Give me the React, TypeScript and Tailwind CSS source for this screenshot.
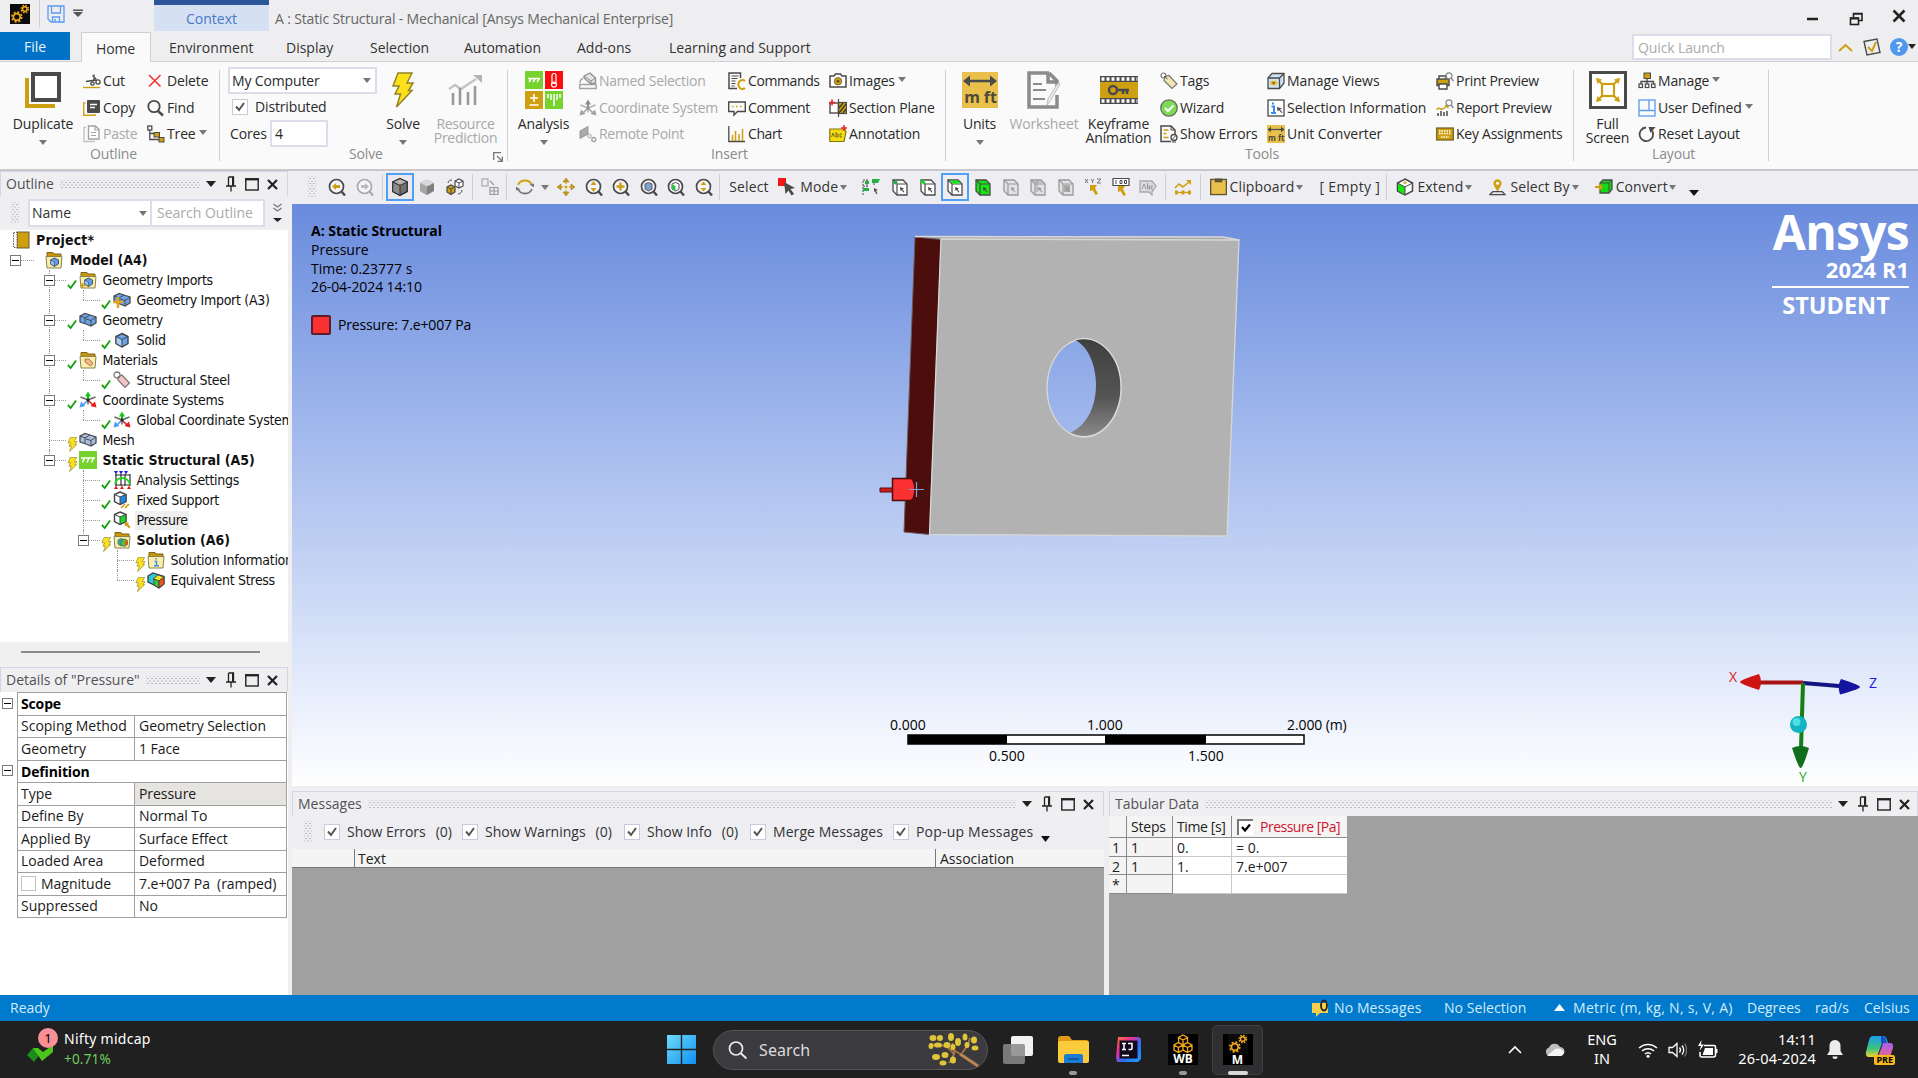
import React from "react";

type P = { children?: React.ReactNode; className?: string };

/* ---------- small building blocks ---------- */

function Svg({ children, className = "w-[18px] h-[18px]", box = "0 0 18 18" }: P & { box?: string }) {
  return (
    <svg viewBox={box} className={"shrink-0 " + className} fill="none">
      {children}
    </svg>
  );
}

function Tri({ className = "", look = "h-[5px] w-[8px] text-[#777]" }: P & { look?: string }) {
  return (
    <svg viewBox="0 0 8 5" preserveAspectRatio="none" className={"shrink-0 " + look + " " + className}>
      <path d="M0 0h8L4 5z" fill="currentColor" />
    </svg>
  );
}

function Sep({ className = "" }: P) {
  return <div className={"w-px shrink-0 bg-[#d0d0d4] " + className} />;
}

const DARK = "#4a4a4a";
const GOLD = "#cf9f12";
const LITE = "#a3a3a3";

/* ---------- ribbon icons ---------- */

const Gears = ({ className = "w-5 h-5" }: P) => (
  <Svg className={className} box="0 0 20 20">
    <rect width="20" height="20" fill="#0b0b0b" />
    <circle cx="6.8" cy="13" r="3.4" stroke="#f5a81c" strokeWidth="1.8" />
    <circle cx="6.8" cy="13" r="5" stroke="#f5a81c" strokeWidth="1.5" strokeDasharray="2 1.93" />
    <circle cx="14.8" cy="5" r="2.3" stroke="#f5a81c" strokeWidth="1.5" />
    <circle cx="14.8" cy="5" r="3.7" stroke="#f5a81c" strokeWidth="1.3" strokeDasharray="1.6 1.3" />
  </Svg>
);

const SaveIcon = () => (
  <Svg>
    <path d="M1 1h16v16H4l-3-3z" stroke="#5b9bf0" strokeWidth="1.3" />
    <path d="M4.5 1v7h9V1M5.5 17v-5h7v5M8 14v3" stroke="#5b9bf0" strokeWidth="1.3" />
  </Svg>
);

const DuplicateIcon = () => (
  <Svg className="w-9 h-9" box="0 0 36 36">
    <path d="M2 6v28h28" stroke={GOLD} strokeWidth="4" />
    <rect x="8" y="2" width="26" height="26" stroke={DARK} strokeWidth="4" fill="#fff" />
  </Svg>
);

const CutIcon = () => (
  <Svg>
    <path d="M0 15.5h17" stroke={GOLD} strokeWidth="1.4" />
    <path d="M3 9.5l10-1.5M11 2.5v4l-2 4M9.5 3.5l4 4" stroke={DARK} strokeWidth="1.3" />
    <circle cx="15" cy="10" r="2.1" stroke={DARK} strokeWidth="1.3" />
    <circle cx="9.5" cy="11.5" r="1.7" stroke={DARK} strokeWidth="1.3" />
  </Svg>
);

const CopyIcon = () => (
  <Svg>
    <path d="M2.5 4H.7v12.3H12V15" stroke={GOLD} strokeWidth="1.4" />
    <rect x="4" y="1" width="13" height="13" rx="1" fill={DARK} />
    <path d="M7 5.5h7M7 8.5h5" stroke="#fff" strokeWidth="1.3" />
  </Svg>
);

const PasteIcon = () => (
  <Svg>
    <path d="M3 2.5H1v14h11" stroke="#c4c4c4" strokeWidth="1.4" />
    <path d="M5.5 1h7l3.5 3.5V14H5.5z" stroke={LITE} strokeWidth="1.4" fill="#fff" />
    <path d="M12 1v4h4M8 7.5h5M8 10.5h5" stroke={LITE} strokeWidth="1.2" />
  </Svg>
);

const DeleteIcon = () => (
  <Svg>
    <path d="M2 3l11.5 11.5M13.5 3L2 14.5" stroke="#f03030" strokeWidth="1.5" />
  </Svg>
);

const FindIcon = () => (
  <Svg>
    <circle cx="7" cy="7.5" r="5.7" stroke={DARK} strokeWidth="1.8" />
    <path d="M11 12l5 4.5" stroke={DARK} strokeWidth="2.4" />
  </Svg>
);

const TreeIcon = () => (
  <Svg>
    <rect x="0.8" y="1" width="4" height="4" stroke={DARK} strokeWidth="1.3" />
    <path d="M2.8 5v9.5H12M2.8 8.5H7" stroke={DARK} strokeWidth="1.3" />
    <rect x="7" y="7.5" width="5.5" height="4.5" fill={GOLD} stroke={DARK} />
    <rect x="12" y="12.5" width="5" height="4.5" fill={GOLD} stroke={DARK} />
  </Svg>
);

const Bolt = ({ className = "w-[24px] h-[36px]" }: P) => (
  <svg viewBox="0 0 24 36" preserveAspectRatio="none" className={"shrink-0 " + className}>
    <path d="M7 1h14l-5 10h6l-4.5 7.5h3.5L5.5 35l4-13H4l4-8H2z" fill="#fbe11c" stroke="#93832a" strokeWidth="1.5" />
  </svg>
);

const ResourceIcon = () => (
  <Svg className="w-[35px] h-[32px]" box="0 0 35 32">
    <path d="M1 15l6-4 6 4L28 5" stroke="#c4c4c4" strokeWidth="2.5" />
    <path d="M25 1h9v8z" fill="#b4b4b4" />
    <path d="M5 31V19M12 31V14M20 31V18M27 31V12" stroke="#999" strokeWidth="2.6" />
  </Svg>
);

const AnalysisIcon = () => (
  <Svg className="w-[38px] h-[38px]" box="0 0 38 38">
    <rect width="18" height="18" fill="#76d22c" />
    <rect x="20" width="18" height="18" fill="#fb0d0d" />
    <rect y="20" width="18" height="18" fill={GOLD} />
    <rect x="20" y="20" width="18" height="18" fill="#76d22c" />
    <path d="M3 7.5h12M6 8l-2 3M10 8l-2 3M14 8l-2 3" stroke="#fff" strokeWidth="1.5" />
    <rect x="27" y="2.5" width="4" height="10" rx="2" stroke="#fff" strokeWidth="1.2" />
    <circle cx="29" cy="13.5" r="2.5" stroke="#fff" strokeWidth="1.2" />
    <path d="M9 23v8M5 27h8M4.5 34h9" stroke="#fff" strokeWidth="1.6" />
    <path d="M23 23v4M26 23v6M29 23v12M32 23v6M35 23v4" stroke="#fff" strokeWidth="1.5" />
  </Svg>
);

const NamedSelIcon = () => (
  <Svg>
    <path d="M.7 12.5h16.5v4H.7z" stroke={LITE} strokeWidth="1.4" />
    <path d="M5 4l6-3 5.5 5v5L12 12 5 6z" stroke="#8d8d8d" strokeWidth="1.3" fill="#e3e3e3" />
    <path d="M5 4l7 5v3M12 9l4.5-3" stroke="#8d8d8d" />
    <path d="M1 11c0-3 1-4 3-4.5" stroke={LITE} strokeWidth="1.3" />
  </Svg>
);

const AxesIcon = ({ color = false }: { color?: boolean }) => (
  <Svg>
    <path d="M9 9V3" stroke={color ? "#12b312" : "#8d8d8d"} strokeWidth="2" />
    <path d="M6 5.5L9 .5l3 5z" fill={color ? "#12c812" : "#8d8d8d"} />
    <path d="M9 9l-6 6" stroke={color ? "#4e9cf5" : "#a3a3a3"} strokeWidth="1.6" />
    <path d="M.5 16.5l1.5-6 4.5 4.5z" fill={color ? "#4e9cf5" : "#a3a3a3"} />
    <path d="M9 9l6 6" stroke={color ? "#e81c1c" : "#a3a3a3"} strokeWidth="1.6" />
    <path d="M17.5 16.5l-1.5-6-4.5 4.5z" fill={color ? "#e81c1c" : "#a3a3a3"} />
    <path d="M1.5 6L8 8.5M16.5 6L10 8.5M9 9v4.5" stroke={color ? "#666" : "#b1b1b1"} strokeWidth="1.5" />
    <circle cx="9" cy="9" r="1.5" fill={color ? "#222" : "#8d8d8d"} />
  </Svg>
);

const RemoteIcon = () => (
  <Svg>
    <path d="M1 6l8-4.5V9l-8 4.5z" fill="#aaa" stroke="#999" />
    <circle cx="10.5" cy="11" r="1.8" stroke={LITE} />
    <circle cx="14.8" cy="14.5" r="2" stroke={LITE} strokeWidth="1.3" />
  </Svg>
);

const CommandsIcon = () => (
  <Svg>
    <path d="M9 16.5H1V1h11.5v5" stroke={DARK} strokeWidth="1.5" />
    <path d="M3.5 4h7M3.5 6.5h6M3.5 9h4M3.5 11.5h4M3.5 14h3" stroke={DARK} strokeWidth="1.1" />
    <path d="M17 9a4 4.5 0 1 0 0 7" stroke={GOLD} strokeWidth="2" />
  </Svg>
);

const CommentIcon = () => (
  <Svg>
    <path d="M.7 3h16.6v9.5H9.5L6 16v-3.5H.7z" stroke={DARK} strokeWidth="1.4" />
    <path d="M4 7.5h1.5M8 7.5h1.5M12 7.5h1.5" stroke={GOLD} strokeWidth="1.5" />
  </Svg>
);

const ChartIcon = () => (
  <Svg>
    <path d="M.8 1v15.5H17" stroke={DARK} strokeWidth="1.3" />
    <path d="M4.5 16V10M7.5 16V6M11 16V9M14.5 16V4" stroke={GOLD} strokeWidth="1.5" />
  </Svg>
);

const CameraIcon = () => (
  <Svg>
    <path d="M1 4h4l1.5-2h5L13 4h4v11H1z" stroke={DARK} strokeWidth="1.5" fill="#fff" />
    <circle cx="9" cy="9.3" r="3.7" fill={GOLD} stroke="#7c6c2c" />
    <circle cx="9" cy="9.3" r="1.4" fill="#554a20" />
  </Svg>
);

const SectionIcon = () => (
  <Svg>
    <rect x="1" y="4" width="8.5" height="10" stroke={DARK} strokeWidth="1.4" fill="#fff" />
    <rect x="9.5" y="3.5" width="8" height="11" fill={GOLD} stroke={DARK} strokeWidth="1.2" />
    <path d="M10 14l7-9M10 9l4-5M14 14l3-4" stroke="#3c3c2c" strokeWidth="1.3" />
    <path d="M9.5 0v18" stroke={DARK} strokeWidth="1.2" />
    <path d="M0 3.5h6M3 .5v6" stroke="#f21c1c" strokeWidth="1.5" />
  </Svg>
);

const AnnotationIcon = () => (
  <Svg>
    <path d="M.8 4h15l1.200 2.500-2 10H.8z" fill="#f3dc12" stroke="#847412" strokeWidth="1.2" />
    <path d="M2.500 12l1.500-4L5.500 12M7 7v5h2V9H7M13 9h-2v3h2" stroke="#7c6c12" />
    <path d="M12 3h6M15 0v6" stroke="#f21c1c" strokeWidth="1.5" />
  </Svg>
);

const UnitsIcon = ({ className = "w-9 h-9" }: P) => (
  <span className={"relative shrink-0 " + className}>
    <Svg className="w-full h-full" box="0 0 36 36">
      <rect width="36" height="36" fill="#e8c04b" />
      <path d="M3 9h30" stroke={DARK} strokeWidth="2.5" />
      <path d="M1 9l7-5.5v11zM35 9l-7-5.5v11z" fill={DARK} />
      <text x="18.5" y="31" textAnchor="middle" fill="#4f4a3a" className="text-[16px] font-bold font-['Open_Sans']">
        m ft
      </text>
    </Svg>
  </span>
);

const WorksheetIcon = () => (
  <Svg className="w-[34px] h-[38px]" box="0 0 34 38">
    <path d="M22 2H2v34h28V24M22 2l8 8v6M21 2v9h9" stroke="#8b8b8b" strokeWidth="3.5" />
    <path d="M6 13h9M6 19h13M6 28h12" stroke="#8b8b8b" strokeWidth="2.2" />
    <path d="M33 13L23 30l-3 4 1-6 10-16z" fill="#eee" stroke="#bbb" />
  </Svg>
);

const KeyframeIcon = () => (
  <Svg className="w-[38px] h-[28px]" box="0 0 38 28">
    <rect width="38" height="28" fill={DARK} />
    <rect y="6" width="38" height="16" fill={GOLD} />
    <path d="M1.5 3h36M1.5 25h36" stroke="#fff" strokeWidth="3.5" strokeDasharray="3 2" />
    <circle cx="13" cy="14" r="4" stroke={DARK} strokeWidth="2.5" />
    <path d="M17 14h12M23 14v4M27 14v4" stroke={DARK} strokeWidth="2.5" />
  </Svg>
);

const TagIcon = () => (
  <Svg>
    <path d="M5 4.5l4-1 8 8.5-5 4.5-8-8z" fill="#f4e3b4" stroke="#777" strokeWidth="1.2" />
    <circle cx="3.5" cy="3.5" r="2.5" stroke="#777" strokeWidth="1.2" />
    <path d="M4 4l3.5 3" stroke="#555" />
  </Svg>
);

const WizardIcon = () => (
  <Svg>
    <circle cx="9" cy="9" r="8.2" fill="#7ed957" stroke="#5f6f5a" strokeWidth="1.3" />
    <path d="M5 9l3 3 5.5-5.5" stroke="#fff" strokeWidth="2" />
  </Svg>
);

const ErrorsIcon = () => (
  <Svg>
    <path d="M11 16.5H1V1h10l4 4v4" stroke={DARK} strokeWidth="1.5" />
    <path d="M3.5 5h5M3.5 8.5h3M3.5 12.5h5" stroke={GOLD} strokeWidth="1.4" />
    <path d="M11 1v4h4" stroke={DARK} />
    <circle cx="14" cy="12.5" r="3" stroke={DARK} strokeWidth="1.3" />
    <path d="M12 14.5l4-4M12 17h4" stroke={DARK} />
  </Svg>
);

const ViewsIcon = () => (
  <Svg>
    <path d="M1 6l4-4.5h12V11l-4.5 5.5H1z" fill="#cfe3f7" stroke={DARK} strokeWidth="1.3" />
    <path d="M1 6h11.5v10M12.5 6L17 1.5" stroke={DARK} strokeWidth="1.3" />
    <ellipse cx="6.7" cy="11" rx="4" ry="2.5" fill="#e8c04b" />
    <circle cx="6.7" cy="11" r="1.3" fill="#7c6512" />
  </Svg>
);

const InfoIcon = () => (
  <Svg>
    <rect x="1" y="1" width="16" height="16" stroke={DARK} strokeWidth="1.3" fill="#fff" />
    <path d="M6 3.5v2M4.5 7.5H7V14M4 14h5" stroke="#3c8cf0" strokeWidth="2" />
    <path d="M10 8l5 1.5-2 1 2.5 3-1 .5-2.5-3-1.5 1.5z" fill={DARK} />
  </Svg>
);

const PrintIcon = () => (
  <Svg>
    <path d="M3 7V4h7v3" stroke={DARK} strokeWidth="1.4" />
    <rect x="1" y="7" width="12" height="6.5" fill={GOLD} stroke={DARK} strokeWidth="1.4" />
    <path d="M3 12h8v5H3z" fill="#fff" stroke={DARK} strokeWidth="1.4" />
    <circle cx="13" cy="3.8" r="3" stroke="#888" strokeWidth="1.2" />
    <path d="M15 6l2.5 3" stroke="#888" strokeWidth="1.5" />
  </Svg>
);

const ReportIcon = () => (
  <Svg>
    <path d="M2 17v-3M5 17v-5M8 17v-4M11 17v-5" stroke={DARK} strokeWidth="1.5" />
    <path d="M.5 10.5L3 9l3 1.5L11 7" stroke={GOLD} strokeWidth="1.5" />
    <path d="M8.5 6h4v4z" fill={GOLD} />
    <circle cx="13" cy="3.8" r="3" stroke="#888" strokeWidth="1.2" />
    <path d="M15 6l2.5 3" stroke="#888" strokeWidth="1.5" />
  </Svg>
);

const KeyboardIcon = () => (
  <Svg>
    <rect x=".7" y="3" width="16.6" height="12" fill={GOLD} stroke="#6c5c1c" strokeWidth="1.2" />
    <path d="M3 6h12M3 8.5h12M5 12h8" stroke="#fff" strokeWidth="1.4" strokeDasharray="1.5 1" />
  </Svg>
);

const FullIcon = () => (
  <Svg className="w-[38px] h-[38px]" box="0 0 38 38">
    <rect x="1.5" y="1.5" width="35" height="35" stroke={DARK} strokeWidth="3" fill="#fff" />
    <rect x="13" y="13" width="12" height="12" stroke={GOLD} strokeWidth="2.2" />
    <path d="M13 13L8 8M25 13l5-5M13 25l-5 5M25 25l5 5" stroke={GOLD} strokeWidth="2" />
    <path d="M7 7l6 1.5-4.5 4.5zM31 7l-6 1.5 4.5 4.5zM7 31l6-1.5L8.5 25zM31 31l-6-1.5 4.5-4.5z" fill={GOLD} />
  </Svg>
);

const ManageIcon = () => (
  <Svg>
    <rect x="6" y="1" width="6.5" height="5.5" fill={GOLD} stroke={DARK} />
    <path d="M9 6.5V12M3 12V9.5h12.5V12" stroke={DARK} strokeWidth="1.3" />
    <rect x="1" y="12" width="3.5" height="3.5" stroke={DARK} strokeWidth="1.2" />
    <rect x="7.3" y="12" width="3.5" height="3.5" stroke={DARK} strokeWidth="1.2" />
    <rect x="13.5" y="12" width="3.5" height="3.5" stroke={DARK} strokeWidth="1.2" />
  </Svg>
);

const UserDefIcon = () => (
  <Svg>
    <rect x="1" y="1" width="16" height="16" stroke="#5b9bf0" strokeWidth="1.3" />
    <path d="M11 1v10.5M1 11.5h16" stroke="#5b9bf0" strokeWidth="1.3" />
  </Svg>
);

const ResetIcon = () => (
  <Svg>
    <path d="M8 2.5a6.8 6.8 0 1 0 6 3" stroke={DARK} strokeWidth="1.8" />
    <path d="M10.5 2h7l-5 6z" fill={DARK} />
  </Svg>
);

/* ---------- ribbon ---------- */

function Item({ icon, label, off, drop }: { icon: React.ReactNode; label: string; off?: boolean; drop?: boolean }) {
  return (
    <div className="flex h-[26.5px] shrink-0 items-center gap-[2px] whitespace-nowrap">
      {icon}
      <span className={off ? "tracking-[-0.27px] text-[#a8a8a8]" : ""}>{label}</span>
      {drop && <Tri className="mt-[-3px] ml-px" />}
    </div>
  );
}

function Col({ children, className = "" }: P) {
  return <div className={"flex shrink-0 flex-col pt-[6px] " + className}>{children}</div>;
}

function Big({ icon, lines, off, drop, className = "" }: { icon: React.ReactNode; lines: string[]; off?: boolean; drop?: boolean; className?: string }) {
  return (
    <div className={"flex shrink-0 flex-col items-center pt-[9px] " + className}>
      <div className="flex h-[38px] items-center justify-center">{icon}</div>
      <div className={"mt-[8px] flex flex-col items-center leading-[14px] whitespace-nowrap " + (off ? "text-[#a8a8a8]" : "")}>
        {lines.map((l) => (
          <span key={l}>{l}</span>
        ))}
      </div>
      {drop && <Tri className="mt-[9px]" />}
    </div>
  );
}

function Group({ children, name, className = "", nameClass = "" }: P & { name: string; nameClass?: string }) {
  return (
    <div className={"flex shrink-0 flex-col " + className}>
      <div className="flex h-[84px]">{children}</div>
      <div className={"leading-[16px] text-[#8b8b8b] " + nameClass}>{name}</div>
    </div>
  );
}

function Check({ className = "" }: P) {
  return (
    <span className={"flex h-4 w-4 shrink-0 items-center justify-center border border-[#c9cbdd] bg-white " + className}>
      <svg viewBox="0 0 10 10" className="h-[10px] w-[10px]" fill="none">
        <path d="M1 4.5L4 8l5-7" stroke="#555" strokeWidth="2" />
      </svg>
    </span>
  );
}

function Ribbon() {
  return (
    <div className="flex h-[109px] shrink-0 border-b-2 border-[#c9c9cb] bg-[#fafafa] tracking-[-0.15px] text-[#2a2a2a]">
      <Group name="Outline" className="w-[219px]" nameClass="pl-[90px]">
        <Big icon={<DuplicateIcon />} lines={["Duplicate"]} drop className="w-[83px] pl-[3px]" />
        <Col className="w-[64px]">
          <Item icon={<CutIcon />} label="Cut" />
          <Item icon={<CopyIcon />} label="Copy" />
          <Item icon={<PasteIcon />} label="Paste" off />
        </Col>
        <Col>
          <Item icon={<DeleteIcon />} label="Delete" />
          <Item icon={<FindIcon />} label="Find" />
          <Item icon={<TreeIcon />} label="Tree" drop />
        </Col>
      </Group>
      <Sep className="mt-2 h-[91px]" />
      <Group name="Solve" className="relative w-[287px]" nameClass="pl-[129px]">
        <Col className="w-[151px] gap-0 pl-[8px]">
          <div className="mt-[-1px] flex h-[27px] w-[149px] shrink-0 items-center justify-between border-2 border-[#dcdceb] bg-white pr-[4px] pl-[2px]">
            <span>My Computer</span>
            <Tri />
          </div>
          <div className="flex h-[26.5px] shrink-0 items-center gap-[7px] pl-[4px]">
            <Check />
            <span>Distributed</span>
          </div>
          <div className="flex h-[26.5px] shrink-0 items-center pl-[2px]">
            <span className="w-[40px]">Cores</span>
            <span className="flex h-[27px] w-[58px] items-center border-2 border-[#dcdceb] bg-white pl-[3px]">4</span>
          </div>
        </Col>
        <Big icon={<Bolt />} lines={["Solve"]} drop className="w-[64px]" />
        <Big icon={<ResourceIcon />} lines={["Resource", "Prediction"]} off className="w-[61px] tracking-[-0.3px]" />
        <Svg className="absolute right-[4px] bottom-[7px] h-[10px] w-[10px]" box="0 0 10 10">
          <path d="M.7 8V.7H8M4 4l5 5M9.3 4.5v4.8H4.5" stroke="#777" strokeWidth="1.3" />
        </Svg>
      </Group>
      <Sep className="mt-2 h-[91px]" />
      <Group name="Insert" className="w-[437px]" nameClass="pl-[203px]">
        <Big icon={<AnalysisIcon />} lines={["Analysis"]} drop className="w-[71px]" />
        <Col className="w-[149px]">
          <Item icon={<NamedSelIcon />} label="Named Selection" off />
          <Item icon={<AxesIcon />} label="Coordinate System" off />
          <Item icon={<RemoteIcon />} label="Remote Point" off />
        </Col>
        <Col className="w-[101px] tracking-[-0.4px]">
          <Item icon={<CommandsIcon />} label="Commands" />
          <Item icon={<CommentIcon />} label="Comment" />
          <Item icon={<ChartIcon />} label="Chart" />
        </Col>
        <Col>
          <Item icon={<CameraIcon />} label="Images" drop />
          <Item icon={<SectionIcon />} label="Section Plane" />
          <Item icon={<AnnotationIcon />} label="Annotation" />
        </Col>
      </Group>
      <Sep className="mt-2 h-[91px]" />
      <Group name="Tools" className="w-[627px]" nameClass="pl-[299px]">
        <Big icon={<UnitsIcon />} lines={["Units"]} drop className="w-[67px]" />
        <Big icon={<WorksheetIcon />} lines={["Worksheet"]} off className="w-[62px]" />
        <Big icon={<KeyframeIcon />} lines={["Keyframe", "Animation"]} className="w-[85px] pl-[2px]" />
        <Col className="w-[107px]">
          <Item icon={<TagIcon />} label="Tags" />
          <Item icon={<WizardIcon />} label="Wizard" />
          <Item icon={<ErrorsIcon />} label="Show Errors" />
        </Col>
        <Col className="w-[169px] tracking-[-0.05px]">
          <Item icon={<ViewsIcon />} label="Manage Views" />
          <Item icon={<InfoIcon />} label="Selection Information" />
          <Item icon={<UnitsIcon className="flex h-[18px] w-[18px]" />} label="Unit Converter" />
        </Col>
        <Col className="tracking-[-0.25px]">
          <Item icon={<PrintIcon />} label="Print Preview" />
          <Item icon={<ReportIcon />} label="Report Preview" />
          <Item icon={<KeyboardIcon />} label="Key Assignments" />
        </Col>
      </Group>
      <Sep className="mt-2 h-[91px]" />
      <Group name="Layout" className="w-[194px]" nameClass="pl-[78px]">
        <Big icon={<FullIcon />} lines={["Full", "Screen"]} className="w-[64px] pl-[3px]" />
        <Col>
          <Item icon={<ManageIcon />} label="Manage" drop />
          <Item icon={<UserDefIcon />} label="User Defined" drop />
          <Item icon={<ResetIcon />} label="Reset Layout" />
        </Col>
      </Group>
      <Sep className="mt-2 h-[91px]" />
    </div>
  );
}

function TopBar() {
  return (
    <div className="flex h-[62px] shrink-0 border-b border-[#cfcfd1] bg-[#eeeef0]">
      <div className="flex w-[811px] flex-col">
        <div className="flex h-[32px]">
          <div className="flex w-[154px] items-start pt-1 pl-[10px]">
            <Gears />
            <Sep className="mt-[-4px] ml-[9px] h-[28px]" />
            <span className="mt-px ml-[7px]">
              <SaveIcon />
            </span>
            <svg viewBox="0 0 10 8" className="mt-[5px] ml-[8px] h-2 w-[10px]">
              <path d="M0 .5h10v1.5H0zM0 3h10L5 8z" fill="#555" />
            </svg>
          </div>
          <div className="flex w-[115px] justify-center border-t-[5px] border-[#2b579a] bg-[#d5e1f2] pt-[4px] leading-[20px] text-[#4a78c8]">Context</div>
          <span className="pt-[9px] pl-[6px] leading-[20px] tracking-[-0.15px] whitespace-nowrap text-[#666]">A : Static Structural - Mechanical [Ansys Mechanical Enterprise]</span>
        </div>
        <div className="flex h-[30px] leading-[34px] whitespace-nowrap text-[#333]">
          <span className="mt-px h-[28px] w-[70px] bg-[#0072c6] text-center leading-[30px] text-[#e6f2fb]">File</span>
          <span className="mt-px ml-[11px] h-[30px] w-[70px] border border-b-0 border-[#cfcfd1] bg-[#fafafa] pr-px text-center leading-[31px] tracking-[-0.2px]">Home</span>
          <span className="ml-[18px] w-[117px] tracking-[0.05px]">Environment</span>
          <span className="w-[84px]">Display</span>
          <span className="w-[94px]">Selection</span>
          <span className="w-[113px]">Automation</span>
          <span className="w-[92px]">Add-ons</span>
          <span>Learning and Support</span>
        </div>
      </div>
      <div className="ml-auto flex w-[286px] flex-col">
        <div className="flex h-[34px] justify-end gap-[29px] pt-[10px] pr-[12px]">
          <Svg className="h-4 w-[14px]" box="0 0 14 16">
            <path d="M1 9h11" stroke="#222" strokeWidth="2.5" />
          </Svg>
          <Svg className="h-4 w-[14px]" box="0 0 14 16">
            <path d="M4.5 7V3.5H13v7H9.5M4 4h9" stroke="#222" strokeWidth="1.6" />
            <rect x="1.5" y="8" width="8" height="6.5" stroke="#222" strokeWidth="1.6" />
            <path d="M1.5 8.5h8" stroke="#222" strokeWidth="2" />
          </Svg>
          <Svg className="mt-[-1px] h-[14px] w-[14px]" box="0 0 14 14">
            <path d="M1.5 1.5l11 11M12.5 1.5l-11 11" stroke="#222" strokeWidth="2.5" />
          </Svg>
        </div>
        <div className="flex items-center">
          <span className="flex h-[26px] w-[200px] items-center border-2 border-[#dcdceb] bg-white pt-px pl-[4px] tracking-[-0.12px] text-[#aaa]">Quick Launch</span>
          <Svg className="ml-[6px] h-[9px] w-[15px]" box="0 0 15 9">
            <path d="M1 8l6.5-6L14 8" stroke={GOLD} strokeWidth="2" />
          </Svg>
          <Svg className="ml-[10px] h-[18px] w-[18px]">
            <path d="M1 3.5L14 1l3 13.5L4 17z" stroke={DARK} strokeWidth="1.4" />
            <path d="M5 9l4 4 4-9" stroke={GOLD} strokeWidth="2" />
          </Svg>
          <span className="ml-[9px] flex h-[18px] w-[18px] items-center justify-center rounded-full bg-[#4f97f0] text-[14px] font-bold text-white">?</span>
          <Tri look="h-[5px] w-[8px] text-[#222]" className="mt-[-2px]" />
        </div>
      </div>
    </div>
  );
}

/* ---------- docked panels ---------- */

const DOTS = "bg-[radial-gradient(#bcbcc2_0.7px,transparent_0.9px),radial-gradient(#bcbcc2_0.7px,transparent_0.9px)] bg-[length:4px_5px] bg-[position:0_0,2px_2.5px]";

function Grip({ className = "" }: P) {
  return <span className={"h-[22px] w-[8px] shrink-0 " + DOTS + " " + className} />;
}

function PanelHead({ title, className = "pr-[9px]" }: P & { title: string }) {
  return (
    <div className={"flex h-[25px] shrink-0 items-center border border-b-0 border-[#d5d6e5] bg-[#efeff2] pl-[5px] text-[#525252] " + className}>
      <span className="whitespace-nowrap">{title}</span>
      <span className={"mx-[6px] h-[8px] grow " + DOTS} />
      <Tri look="h-[6px] w-[10px] text-[#222]" />
      <Svg className="ml-[10px] h-4 w-[10px]" box="0 0 10 16">
        <path d="M2.5 1h5v8.5M2.5 1v8.5M0 10h10M5 10v5.5" stroke="#222" strokeWidth="1.3" />
        <path d="M7 1v8.5" stroke="#222" strokeWidth="2" />
      </Svg>
      <Svg className="ml-[9px] h-[13px] w-[14px]" box="0 0 14 13">
        <rect x=".8" y="1" width="12.4" height="11" stroke="#222" strokeWidth="1.4" />
        <path d="M0 1.3h14" stroke="#222" strokeWidth="2.2" />
      </Svg>
      <Svg className="ml-[8px] h-[11px] w-[11px]" box="0 0 11 11">
        <path d="M1 1l9 9M10 1l-9 9" stroke="#222" strokeWidth="2.2" />
      </Svg>
    </div>
  );
}

function Cube({ fill = "#6ba4ea", face = "#a9ccf5", className = "w-[18px] h-[18px]" }: { fill?: string; face?: string; className?: string }) {
  return (
    <Svg className={className}>
      <path d="M9 2.5l6 3v7l-6 3.5-6-3.5v-7z" fill={fill} stroke="#444" strokeWidth="1.4" />
      <path d="M3 5.5l6 3v7.5l-6-3.5z" fill={face} stroke="#444" />
      <path d="M9 8.5l6-3" stroke="#444" />
    </Svg>
  );
}

function Folder({ children }: P) {
  return (
    <Svg>
      <path d="M2 6V1.5h6l1 1.5h7v3" fill="#c8960c" stroke="#7c6414" />
      <path d="M1 5.5h16l-1 11.5H2z" fill="#f7efab" stroke="#8a8250" />
      {children}
    </Svg>
  );
}

const MiniCube = ({ a = "#5b9bf0", b = "#8ec0fa" }: { a?: string; b?: string }) => (
  <g>
    <path d="M9.5 7l4 2v4l-4 2.5-4-2.5V9z" fill={a} stroke="#555" />
    <path d="M5.5 9l4 2v4.5l-4-2.5z" fill={b} stroke="#555" strokeWidth=".7" />
  </g>
);

const TwoCubes = ({ fill = "#6ba4ea", plus = false }: { fill?: string; plus?: boolean }) => (
  <Svg>
    <path d="M1 5l5-2.5L11 4l6 2v6l-5 3-5-2-6-2z" fill={fill} stroke="#4a4a4a" strokeWidth="1.3" />
    <path d="M1 5l5 2v5M6 7l5-3M7 8l5 1.5V15M12 9.5L17 6" stroke="#4a4a4a" />
    {plus && <path d="M0 11h10M5 6v11" stroke="#e3a51c" strokeWidth="2.5" />}
  </Svg>
);

const SupportCube = ({ face, children }: P & { face: string }) => (
  <Svg>
    <path d="M7 1l6 2.5v7L7 13.5 1.5 10.5V3.5z" fill="#fff" stroke="#444" strokeWidth="1.4" />
    <path d="M7 6l6-2.5v7L7 13.5z" fill={face} stroke="#444" />
    <path d="M1.5 3.5L7 6" stroke="#444" />
    {children}
  </Svg>
);

const treeIcons: Record<string, React.ReactNode> = {
  project: (
    <Svg>
      <rect x="5" y="1" width="12" height="16" fill={GOLD} stroke="#6c5c2c" />
      <path d="M1.5 1.5H5v15H1.5z" fill="#fff" stroke="#666" strokeDasharray="1.5 1" />
    </Svg>
  ),
  model: <Folder><MiniCube /></Folder>,
  gimports: <Folder><MiniCube /><path d="M1 14.5h5M3.5 12v5" stroke="#d19a10" strokeWidth="1.5" /></Folder>,
  gimport: <TwoCubes plus />,
  geometry: <TwoCubes />,
  solid: <Cube />,
  materials: <Folder><path d="M6 8h4l4 4-2.5 3L6 11z" fill="#f2b48a" stroke="#b57a4c" /></Folder>,
  steel: (
    <Svg>
      <path d="M5 6l4-2 7.5 8-4.5 4.5-7-7.5z" fill="#f5c3c3" stroke="#777" strokeWidth="1.2" />
      <circle cx="4" cy="4" r="3" stroke="#777" strokeWidth="1.3" />
    </Svg>
  ),
  coord: <AxesIcon color />,
  mesh: <TwoCubes fill="#a9bfe0" />,
  statics: (
    <Svg>
      <rect width="18" height="18" fill="#76d22c" />
      <path d="M2 7h14M5.5 7l-2 4.5M10 7l-2 4.5M14.5 7l-2 4.5" stroke="#fff" strokeWidth="1.5" />
    </Svg>
  ),
  settings: (
    <Svg>
      <path d="M3 3v12M8 3v12M12 3v12M17 3v12M2 4h15M2 14h15" stroke="#333" strokeWidth="1.2" />
      <path d="M1 0h4L3 3.5zM6 0h4L8 3.5zM11 0h4l-2 3.5z" fill="#1c1ce8" />
      <path d="M2 13c2-8 12-8 15 0" stroke="#1cd81c" strokeWidth="1.8" />
      <path d="M1 18l2-3.5L5 18zM7 18l2-3.5 2 3.5zM14 18l2-3.5 2 3.5z" fill="#e81c1c" />
    </Svg>
  ),
  fixed: <SupportCube face="#1c86e8"><path d="M8 17l4-4M12 17l4-4" stroke="#d19a10" strokeWidth="1.6" /></SupportCube>,
  pressure: <SupportCube face="#14dc28"><path d="M11.5 11.5h4.500l-1 1.5 2.5 3-1.5 1.5-2.5-3-1.5 1z" fill="#d19a10" /></SupportCube>,
  solution: (
    <Folder>
      <path d="M5 9l3-1.5 3 1v5l-3 1.5-3-2z" fill="#26b3b3" stroke="#555" strokeWidth=".7" />
      <path d="M8 10l4-2 2.5 1.5v4l-3 2L8 14z" fill="#57c42c" stroke="#555" strokeWidth=".7" />
      <path d="M12 10l2.5-.5v4L12 15z" fill="#e8541c" />
    </Folder>
  ),
  info: <Folder><path d="M9 7v1.5M7.5 10.5H9.5V14.5M7 14.7h5" stroke="#3c8cf0" strokeWidth="1.4" /></Folder>,
  stress: (
    <Svg>
      <path d="M1 5l5-3 5 1.5 6 2V13l-5 4-5-3-6-3z" fill="#2cc8d8" stroke="#3c3c3c" strokeWidth="1.3" />
      <path d="M6 8l5-4 6 2-5 4z" fill="#f3e31c" stroke="#3c3c3c" strokeWidth=".8" />
      <path d="M7 8l5 2v7l-5-3z" fill="#3cc83c" stroke="#3c3c3c" strokeWidth=".8" />
      <path d="M12 10l5-4v7l-5 4z" fill="#e8541c" stroke="#3c3c3c" strokeWidth=".8" />
    </Svg>
  ),
};

function Expander({ className = "" }: P) {
  return (
    <span className={"flex h-[11px] w-[11px] shrink-0 items-center justify-center border border-[#7a7a7a] bg-white " + className}>
      <span className="h-px w-[7px] bg-black" />
    </span>
  );
}

/* Guide cell kinds: "." empty, "v" line through, "t" tee, "l" elbow, "T" tee with expander, "L" elbow with expander */
function Guide({ kind }: { kind: string }) {
  const half = kind === "l" || kind === "L";
  const low = kind.toLowerCase();
  return (
    <span className="relative flex h-5 w-[34px] shrink-0 items-center">
      {kind !== "." && <span className={"absolute top-0 left-[17px] border-l border-dotted border-[#999] " + (half ? "h-[10px]" : "h-5")} />}
      {(low === "t" || low === "l") && <span className="ml-[17px] w-[17px] border-t border-dotted border-[#999]" />}
      {(kind === "T" || kind === "L") && <Expander className="absolute left-[12px]" />}
    </span>
  );
}

const rows: { g: string; s: "c" | "b"; i: string; t: string; bold?: boolean; sel?: boolean }[] = [
  { g: "T", s: "c", i: "gimports", t: "Geometry Imports" },
  { g: "vl", s: "c", i: "gimport", t: "Geometry Import (A3)" },
  { g: "T", s: "c", i: "geometry", t: "Geometry" },
  { g: "vl", s: "c", i: "solid", t: "Solid" },
  { g: "T", s: "c", i: "materials", t: "Materials" },
  { g: "vl", s: "c", i: "steel", t: "Structural Steel" },
  { g: "T", s: "c", i: "coord", t: "Coordinate Systems" },
  { g: "vl", s: "c", i: "coord", t: "Global Coordinate System" },
  { g: "t", s: "b", i: "mesh", t: "Mesh" },
  { g: "L", s: "b", i: "statics", t: "Static Structural (A5)", bold: true },
  { g: ".t", s: "c", i: "settings", t: "Analysis Settings" },
  { g: ".t", s: "c", i: "fixed", t: "Fixed Support" },
  { g: ".t", s: "c", i: "pressure", t: "Pressure", sel: true },
  { g: ".L", s: "b", i: "solution", t: "Solution (A6)", bold: true },
  { g: "..t", s: "b", i: "info", t: "Solution Information" },
  { g: "..l", s: "b", i: "stress", t: "Equivalent Stress" },
];

function Status({ kind }: { kind: "c" | "b" }) {
  return (
    <span className="flex h-5 w-[13px] shrink-0 items-end pl-[1px]">
      {kind === "c" ? (
        <Svg className="mb-0 h-[11px] w-[10px]" box="0 0 11 11">
          <path d="M1 6l3 3.5L10 1" stroke="#12a012" strokeWidth="2" />
        </Svg>
      ) : (
        <Bolt className="mb-[-2px] h-[15px] w-[11px]" />
      )}
    </span>
  );
}

function OutlinePanel() {
  return (
    <div className="flex h-[496px] shrink-0 flex-col">
      <PanelHead title="Outline" />
      <div className="flex h-[34px] shrink-0 items-center bg-[#efeff2] pl-[11px]">
        <Grip />
        <span className="ml-[9px] flex h-[28px] w-[124px] items-center justify-between border-2 border-[#dcdceb] bg-white pr-[3px] pl-[2px] text-[#333]">
          Name
          <Tri />
        </span>
        <span className="flex h-[28px] w-[113px] items-center border-2 border-l-0 border-[#dcdceb] bg-white pl-[5px] whitespace-nowrap text-[#aaa]">Search Outline</span>
        <Svg className="ml-[8px] h-[20px] w-[9px]" box="0 0 9 20">
          <path d="M.5 1L4.5 4l4-3M.5 5l4 3 4-3" stroke="#777" strokeWidth="1.3" />
          <path d="M0 15h9l-4.5 4z" fill="#222" />
        </Svg>
      </div>
      <div className="h-[412px] shrink-0 overflow-hidden bg-white font-['DejaVu_Sans_Condensed','DejaVu_Sans',sans-serif] text-[14px] tracking-[-0.3px] whitespace-nowrap text-[#111]">
        <div className="flex h-5 items-center pl-[12px]">
          {treeIcons.project}
          <span className="ml-[6px] font-bold tracking-[0.15px]">Project*</span>
        </div>
        <div className="flex h-5 items-center pl-[10px]">
          <Expander />
          <span className="mr-[11px] w-[13px] border-t border-dotted border-[#999]" />
          {treeIcons.model}
          <span className="ml-[7px] font-bold tracking-[0px]">Model (A4)</span>
        </div>
        {rows.map((r) => (
          <div key={r.t} className="flex h-5 items-center pl-[32px]">
            {r.g.split("").map((k, n) => (
              <Guide key={n} kind={k} />
            ))}
            <Status kind={r.s} />
            {treeIcons[r.i]}
            <span className={"ml-[4px] h-[19px] px-[1.5px] leading-[19px] " + (r.bold ? "font-bold tracking-[0.02px] " : "") + (r.sel ? "bg-[#efefef]" : "")}>{r.t}</span>
          </div>
        ))}
      </div>
      <div className="flex h-[25px] shrink-0 items-start bg-[#f0f0f0] pt-[9px] pl-[21px]">
        <span className="h-[2px] w-[239px] bg-[#8a8a8a]" />
      </div>
    </div>
  );
}

function DetailsRow({ k, v, shade, box }: { k: string; v?: string; shade?: boolean; box?: boolean }) {
  return (
    <div className="flex h-[22.5px]">
      <span className="flex w-[17px] shrink-0 items-center pl-[2px]">{v === undefined && <Expander />}</span>
      {v === undefined ? (
        <span className="grow border border-b-0 border-[#a0a0a0] pl-[3px] leading-[22px] font-bold tracking-[-0.15px] text-black">{k}</span>
      ) : (
        <>
          <span className="flex w-[117px] items-center border-t border-l border-[#a0a0a0] pl-[3px] whitespace-nowrap">
            {box && <span className="mr-[5px] h-[15px] w-[15px] border border-[#c4c4c4]" />}
            {k}
          </span>
          <span className={"flex grow items-center border border-b-0 border-[#a0a0a0] pl-[4px] tracking-[-0.05px] whitespace-pre " + (shade ? "bg-[#e6e4e0]" : "")}>{v}</span>
        </>
      )}
    </div>
  );
}

function DetailsPanel() {
  return (
    <div className="flex grow flex-col bg-white">
      <PanelHead title={'Details of "Pressure"'} />
      <div className="mr-[1px] text-[#1a1a1a]">
        <DetailsRow k="Scope" />
        <DetailsRow k="Scoping Method" v="Geometry Selection" />
        <DetailsRow k="Geometry" v="1 Face" />
        <DetailsRow k="Definition" />
        <DetailsRow k="Type" v="Pressure" shade />
        <DetailsRow k="Define By" v="Normal To" />
        <DetailsRow k="Applied By" v="Surface Effect" />
        <DetailsRow k="Loaded Area" v="Deformed" />
        <DetailsRow k="Magnitude" v="7.e+007 Pa  (ramped)" box />
        <DetailsRow k="Suppressed" v="No" />
        <div className="ml-[17px] h-px bg-[#a0a0a0]" />
      </div>
    </div>
  );
}

/* ---------- view toolbar ---------- */

function Lens({ children, off }: P & { off?: boolean }) {
  return (
    <Svg>
      <circle cx="8.5" cy="8.5" r="7" stroke={off ? "#aaa" : DARK} strokeWidth="1.7" fill="#f6f6f8" />
      <path d="M13 13l4 4.5" stroke={off ? "#aaa" : DARK} strokeWidth="2.4" />
      {children}
    </Svg>
  );
}

function Tool({ children, className = "w-[27.6px]" }: P) {
  return <span className={"flex h-[28px] shrink-0 items-center justify-center " + className}>{children}</span>;
}

const Pick = ({ top, fill, off, children }: P & { top?: boolean; fill?: boolean; off?: boolean }) => (
  <Svg>
    <path d="M2 2h10l4 4v11H6l-4-4z" fill={fill ? "#14e814" : off ? "#e3e3e6" : "#fff"} stroke={off ? "#999" : DARK} strokeWidth="1.3" />
    <path d="M2 2l4 4h10M6 6v11" stroke={off ? "#999" : DARK} strokeWidth="1.2" />
    {top && <path d="M3.5 2.5H12L15 5.5H6.5z" fill="#14e814" />}
    {children}
    <path d="M9 9l4 1.5-1.5.7 2 2.8-1 .6-1.8-2.6L9.5 13z" fill={off ? "#999" : DARK} />
  </Svg>
);

const CARET = "h-[5px] w-[7px] text-[#777]";

function ViewToolbar() {
  return (
    <div className="flex h-[33px] shrink-0 items-center bg-[#eeeef2] pb-px pl-[16px] whitespace-nowrap text-[#333]">
      <Grip />
      <Tool className="ml-[7px] w-[28px]"><Lens><path d="M4 8.5l4-3.500v2h4v3H8v2z" fill={GOLD} /></Lens></Tool>
      <Tool><Lens off><path d="M13 8.5L9 5v2H5v3h4v2z" fill="#bbb" /></Lens></Tool>
      <Sep className="mx-[3px] h-[26px]" />
      <Tool className="w-[28px] border-2 border-[#4ea0f5] bg-[#e9e9ed]">
        <Svg className="h-[20px] w-[20px]">
          <path d="M9 1.5l6.5 3v8.5L9 16.5 2.5 13V4.5z" fill="#707070" stroke="#333" strokeWidth="1.3" />
          <path d="M2.5 4.5L9 7.5v9L2.5 13z" fill="#8c8c8c" stroke="#333" strokeWidth=".9" />
          <path d="M9 1.5l6.5 3L9 7.5 2.5 4.5z" fill="#b4b4b4" stroke="#333" strokeWidth=".9" />
        </Svg>
      </Tool>
      <Tool>
        <Svg><path d="M9 2l7 3v8l-7 4-7-4V5z" fill="#7f7f7f" /><path d="M2 5l7 3.5V17l-7-4z" fill="#a6a6a6" /><path d="M2 5l7-3 7 3-7 3.5z" fill="#d8d8d8" /></Svg>
      </Tool>
      <Tool>
        <Svg><path d="M9 3l4-2 4 2v5l-4 2-4-2z" fill="#fff" stroke={DARK} strokeWidth="1.2" /><path d="M9 3l4 2 4-2M13 5v5" stroke={DARK} /><path d="M1 9l4-2 4 2v5l-4 2.5L1 14z" fill={GOLD} stroke={DARK} strokeWidth="1.2" /><path d="M1 9l4 2 4-2M5 11v5" stroke={DARK} /><path d="M2 5c0-2 2-3 4-3M16 12c0 2-2 4-4 4" stroke={DARK} /></Svg>
      </Tool>
      <Sep className="mx-[3px] h-[26px]" />
      <Tool><Svg><rect x="1" y="1" width="6" height="7" stroke="#aaa" strokeWidth="1.2" /><path d="M9 3l4 4M9 9.5h8v7H9zM13 9.5v7M9 13h8" stroke="#999" strokeWidth="1.2" /></Svg></Tool>
      <Sep className="mx-[3px] h-[26px]" />
      <Tool className="w-[29px]"><Svg><path d="M2 7a7.500 7 0 0 1 14 0" stroke={GOLD} strokeWidth="1.8" /><path d="M16 11a7.500 7 0 0 1-14 0" stroke="#777" strokeWidth="1.8" /><path d="M13.5 6.5l4.5-1v4zM4.5 11.5L0 12.5v-4z" fill="#777" /></Svg></Tool>
      <Tri className="mx-[2px]" />
      <Tool className="w-[29px]"><Svg><path d="M9 0l3 4H6zM9 18l3-4H6zM0 9l4-3v6zM18 9l-4-3v6z" fill={GOLD} stroke="#8c6c12" strokeWidth=".5" /><path d="M9 7.5v3M7.5 9h3M9 4v2M9 12v2M4 9h2M12 9h2" stroke={GOLD} strokeWidth="1.3" /></Svg></Tool>
      <Tool><Lens><path d="M8.5 3l3 4h-6zM8.5 14l3-4h-6z" fill={GOLD} /></Lens></Tool>
      <Tool className="w-[27px]"><Lens><path d="M8.5 4.5v8M4.5 8.5h8" stroke={GOLD} strokeWidth="2.4" /></Lens></Tool>
      <Tool className="w-[27.2px]"><Lens><path d="M5 6l3.5-1.5L12 6v5l-3.5 2L5 11z" fill="#7fa3d0" stroke="#556" /></Lens></Tool>
      <Tool><Lens><path d="M5 6l3.5-1.5L12 6v5l-3.5 2L5 11z" fill="#fff" stroke="#555" /><path d="M5 6l3.5 2v5L5 11z" fill="#2cc84c" /></Lens></Tool>
      <Tool><Lens><path d="M8.5 3.5l3 3.5h-6zM8.5 13.5l3-3.5h-6z" fill={GOLD} /></Lens></Tool>
      <Sep className="mr-[9px] ml-[2px] h-[26px]" />
      <span className="w-[49px] tracking-[0.1px]">Select</span>
      <Svg className="h-[18px] w-[18px]"><rect width="8" height="8" fill="#f81414" /><path d="M6 4l11 6-4.5 1 3.5 5-2.5 1.5-3-5-3 3.5z" fill={DARK} /></Svg>
      <span className="ml-[4px] tracking-[0.1px]">Mode</span>
      <Tri look={CARET} className="mr-[8px] ml-[2px]" />
      <Tool className="w-[31px]">
        <Svg><path d="M1 17V2h6M5 2v7M1 8h6M12 2v6M2 12h6" stroke={DARK} strokeDasharray="2 1" /><path d="M10 1h8l-2 4h-6zM1 10h6v3H1zM3 3h4v3H3z" fill="#22b044" /><path d="M12 10l4 2-2 .5 1.500 3-1.5.5-1-3-1 1z" fill={DARK} /></Svg>
      </Tool>
      <Tool><Pick><circle cx="4.5" cy="4.5" r="2" fill="#22b044" /></Pick></Tool>
      <Tool><Pick><path d="M2 2l4 4" stroke="#14d814" strokeWidth="2.5" /></Pick></Tool>
      <Tool className="w-[28px] border-2 border-[#4ea0f5]"><Pick top /></Tool>
      <Tool><Pick fill /></Tool>
      <Tool><Pick off /></Tool>
      <Tool><Pick off><path d="M5 4h9M8 2v12" stroke="#999" /></Pick></Tool>
      <Tool><Pick off><path d="M7 7h6v7H7z" fill="#aaa" /></Pick></Tool>
      <Tool className="w-[27px]"><Svg><path d="M1 1l3 4M4 1L1 5M7 1l1.5 2L10 1M8.5 3v2M13 1h4l-4 4h4" stroke="#777" /><path d="M6 7h7l-2 3 3 6-2.5 1L8.5 12 6 13z" fill={GOLD} /></Svg></Tool>
      <Tool><Svg><path d="M1 .5h16v7H1z" stroke={DARK} fill="#fff" strokeWidth="1.2" /><path d="M4 2v4M8 2.5v3h2v-3zM12.5 2.5v3h2v-3z" stroke={DARK} /><path d="M6 8h7l-2 3 3 6-2.5 1-3-5L6 14z" fill={GOLD} /></Svg></Tool>
      <Tool><Svg><path d="M1 3h12l4 5-4 6v3l-3-3H1z" fill="#dcdcdf" stroke="#aaa" strokeWidth="1.3" /><path d="M3 11l2-5 2 5M8.5 5v6h2V8h-2M14 8h-2v3h2" stroke="#999" /></Svg></Tool>
      <Sep className="mx-[3px] h-[26px]" />
      <Tool><Svg><path d="M1 10l4-4 4 3 6-5" stroke={GOLD} strokeWidth="1.6" /><path d="M12 2h5v5z" fill={GOLD} /><path d="M1 14.5h16" stroke={GOLD} strokeWidth="1.3" /><path d="M2.5 12.5v4M9 12.5v4M15.5 12.5v4" stroke={GOLD} strokeWidth="3" /></Svg></Tool>
      <Sep className="mr-[9px] ml-[3px] h-[26px]" />
      <Svg className="h-[18px] w-[17px]"><rect x=".7" y="1" width="16.6" height="16" fill="#e8c04b" stroke="#5c5434" strokeWidth="1.4" /><rect x="5" y="0" width="8" height="4" fill="#5c5434" /></Svg>
      <span className="ml-[3px] tracking-[0.15px]">Clipboard</span>
      <Tri look={CARET} className="ml-[2px]" />
      <span className="ml-[16px] w-[67px] tracking-[0.35px]">[ Empty ]</span>
      <Sep className="mr-[9px] h-[26px]" />
      <Svg><path d="M9 1l7.5 4v8L9 17l-7.5-4V5z" fill="#fff" stroke={DARK} strokeWidth="1.5" /><path d="M1.5 5L9 9v8l-7.5-4z" fill="#14e814" stroke={DARK} /><path d="M9 9l7.5-4" stroke={DARK} /><path d="M9 3v3M7 5h4" stroke={GOLD} /></Svg>
      <span className="ml-[3px] tracking-[0.15px]">Extend</span>
      <Tri look={CARET} className="ml-[2px]" />
      <Svg className="ml-[17px] h-[18px] w-[17px]"><path d="M9 14L5 7a4.400 4.400 0 1 1 8 0z" fill={GOLD} /><circle cx="9" cy="5" r="1.6" fill="#fff" /><path d="M1 17l3-3h10l3 3z" stroke={DARK} strokeWidth="1.3" /></Svg>
      <span className="ml-[4px] tracking-[0.1px]">Select By</span>
      <Tri look={CARET} className="ml-[2px]" />
      <Svg className="ml-[16px] h-[18px] w-[18px]"><path d="M5 5l3-3h9v9l-3 4H5z" fill="#14d814" stroke={DARK} strokeWidth="1.3" /><path d="M5 5h9v9M14 5l3-3" stroke={DARK} /><path d="M0 9h6M4 6l3 3-3 3" stroke={GOLD} strokeWidth="1.8" /></Svg>
      <span className="ml-[3px] tracking-[0.1px]">Convert</span>
      <Tri look={CARET} className="ml-[1px]" />
      <Tri look="h-[6px] w-[10px] text-[#111]" className="mt-[11px] ml-[13px]" />
    </div>
  );
}

/* ---------- graphics viewport ---------- */

function Viewport() {
  return (
    <div className="relative h-[582px] shrink-0 overflow-hidden bg-linear-to-b from-[#6a8bdd] to-white font-['Open_Sans',sans-serif] text-[14px] whitespace-nowrap text-black">
      <svg viewBox="292 204 1626 582" className="absolute inset-0 h-full w-full">
        <path d="M915 236l308 1 16 3-298-1z" fill="#a5a5a5" />
        <path d="M915 237l26 2.5-11.5 295L904 532z" fill="#4c0d0d" stroke="#6d5a5a" />
        <path fillRule="evenodd" d="M941 239l298 1-12 296-297.5-1.500zM1084 339a37 49 0 1 0 .1 0z" fill="#b2b2b2" stroke="#d7d7d7" strokeWidth="1.3" />
        <path d="M915 236.5l308 .5 16 3" stroke="#d9d9d9" strokeWidth="1.5" fill="none" />
        <defs>
          <linearGradient id="bore" x1="0" y1="0" x2="0" y2="1">
            <stop offset="0" stopColor="#3f3f3f" />
            <stop offset=".6" stopColor="#555" />
            <stop offset="1" stopColor="#8a8a8a" />
          </linearGradient>
        </defs>
        <path d="M1075 340a37 49 0 0 1 46 48 37 49 0 0 1-51 45c18-8 26-28 26-48s-8-39-21-45z" fill="url(#bore)" />
        <path d="M1075 340a37 49 0 0 1 46 48 37 49 0 0 1-51 45" fill="none" stroke="#dcdcdc" strokeWidth="1.3" />
        <path d="M880 488h13v4h-13z" fill="#d01c1c" stroke="#511" />
        <path d="M892.5 478.500h18q2 0 3 3 3 8 0 16-1 3-3 3h-18z" fill="#fb3030" stroke="#4c0d0d" strokeWidth="1.5" />
        <path d="M909 489.5h15M916.5 482v15" stroke="#7fa3d8" strokeWidth="1.2" />
        <rect x="908" y="735" width="396" height="9" fill="#fff" stroke="#000" strokeWidth="1.5" />
        <path d="M908 735h99v9h-99zM1105 735h101v9h-101z" fill="#000" />
        <path d="M1803 682.5h-44" stroke="#a81414" strokeWidth="4" />
        <path d="M1740 682q0-2 19-8 4 8 0 16-19-6-19-8z" fill="#d01414" />
        <path d="M1803 683l42 3.5" stroke="#141480" strokeWidth="4" />
        <path d="M1860 687q0-2-19-8-4 7-1 15.5 20-5.500 20-7.500z" fill="#1414a0" />
        <path d="M1803 683l-2 66" stroke="#148014" strokeWidth="4" />
        <path d="M1800.5 768q-2 0-8.500-20 8-4 17 0-6 20-8.500 20z" fill="#0f6f1c" />
        <circle cx="1798.5" cy="724.5" r="8.5" fill="#14b3c0" />
        <circle cx="1796.5" cy="722" r="4" fill="#4fdfe6" />
      </svg>
      <div className="absolute top-[18px] left-[19px] flex flex-col leading-[18.8px]">
        <span className="font-bold tracking-[-0.03px]">A: Static Structural</span>
        <span>Pressure</span>
        <span>Time: 0.23777 s</span>
        <span className="tracking-[-0.1px]">26-04-2024 14:10</span>
      </div>
      <div className="absolute top-[111px] left-[19px] flex items-center gap-[7px]">
        <span className="h-[20px] w-[20px] rounded-[2px] border-2 border-[#5c1c2c] bg-[#fb3030]" />
        <span className="tracking-[-0.15px]">Pressure: 7.e+007 Pa</span>
      </div>
      <div className="absolute top-[2px] right-[9px] flex w-[137px] flex-col text-white">
        <span className="text-right font-['Open_Sans'] text-[48px] leading-[52px] font-bold tracking-[-0.7px]">Ansys</span>
        <span className="mt-[-1px] text-right text-[22px] leading-[25px] font-bold">2024 R1</span>
        <span className="mt-[4px] h-[2px] bg-white" />
        <span className="mt-[4px] pr-[9px] text-center text-[23.5px] leading-[26px] font-bold">STUDENT</span>
      </div>
      <span className="absolute top-[512px] left-[598px]">0.000</span>
      <span className="absolute top-[512px] left-[795px]">1.000</span>
      <span className="absolute top-[512px] left-[995px] tracking-[-0.1px]">2.000 (m)</span>
      <span className="absolute top-[543px] left-[697px]">0.500</span>
      <span className="absolute top-[543px] left-[896px]">1.500</span>
      <span className="absolute top-[464px] left-[1437px] text-[#e02020]">X</span>
      <span className="absolute top-[470px] left-[1577px] text-[#1c1cf0]">Z</span>
      <span className="absolute top-[564px] left-[1507px] text-[#1cb01c]">Y</span>
    </div>
  );
}

/* ---------- messages and tabular data ---------- */

function MsgCheck({ label, count, className = "" }: { label: string; count?: boolean; className?: string }) {
  return (
    <span className={"flex shrink-0 items-center " + className}>
      <Check />
      <span className="ml-[7px]">{label}</span>
      {count && <span className="ml-[10px]">(0)</span>}
    </span>
  );
}

function MessagesPanel() {
  return (
    <div className="flex w-[812px] shrink-0 flex-col bg-[#a0a0a0]">
      <PanelHead title="Messages" />
      <div className="flex h-[33px] shrink-0 items-center bg-[#eeeef2] pb-px pl-[12px] whitespace-nowrap text-[#333]">
        <Grip />
        <MsgCheck label="Show Errors" count className="ml-[12px] w-[138px] tracking-[-0.05px]" />
        <MsgCheck label="Show Warnings" count className="w-[162px]" />
        <MsgCheck label="Show Info" count className="w-[126px]" />
        <MsgCheck label="Merge Messages" className="w-[143px] tracking-[0.07px]" />
        <MsgCheck label="Pop-up Messages" className="w-[148px] tracking-[0.2px]" />
        <Tri look="h-[6px] w-[9px] text-[#111]" className="mt-[13px]" />
      </div>
      <div className="flex h-[19px] shrink-0 border-b border-[#777] bg-[#f4f4f4] leading-[19px] text-[#222]">
        <span className="w-[63px] border-r border-[#777]" />
        <span className="w-[581px] border-r border-[#777] pl-[3px]">Text</span>
        <span className="pl-[4px]">Association</span>
      </div>
    </div>
  );
}

const tab = [
  ["1", "1", "0.", "= 0."],
  ["2", "1", "1.", "7.e+007"],
  ["*", "", "", ""],
];

function TabularPanel() {
  return (
    <div className="flex grow flex-col bg-[#a0a0a0]">
      <PanelHead title="Tabular Data" className="pr-[7px]" />
      <div className="flex h-[22px] w-[238px] bg-[#f4f4f4] leading-[21px] whitespace-nowrap text-[#222]">
        <span className="w-[18px] border-r border-b border-[#8c8c8c]" />
        <span className="w-[46px] border-r border-b border-[#8c8c8c] pl-[4px] tracking-[-0.2px]">Steps</span>
        <span className="w-[59px] border-r border-b border-[#8c8c8c] pl-[4px] tracking-[-0.4px]">Time [s]</span>
        <span className="flex w-[115px] items-center border-b border-[#8c8c8c] pl-[5px]">
          <span className="flex h-4 w-4 items-center justify-center border-t-2 border-l-2 border-[#777] bg-white">
            <svg viewBox="0 0 10 10" className="h-[10px] w-[10px]" fill="none">
              <path d="M1 4L4 7.5 9 1.5" stroke="#000" strokeWidth="2.2" />
            </svg>
          </span>
          <span className="ml-[7px] tracking-[-0.5px] text-[#d0142c]">Pressure [Pa]</span>
        </span>
      </div>
      {tab.map((r) => (
        <div key={r[0]} className="flex h-[18.7px] w-[238px] bg-white leading-[20px] text-[#222]">
          <span className="w-[18px] border-r border-b border-[#8c8c8c] bg-[#f4f4f4] pl-[3px]">{r[0]}</span>
          <span className="w-[46px] border-r border-b border-[#8c8c8c] bg-[#f4f4f4] pl-[4px]">{r[1]}</span>
          <span className="w-[59px] border-r border-b border-[#c9c9c9] pl-[4px]">{r[2]}</span>
          <span className="w-[115px] border-b border-[#c9c9c9] pl-[4px]">{r[3]}</span>
        </div>
      ))}
    </div>
  );
}

/* ---------- bottom bars ---------- */

function StatusBar() {
  return (
    <div className="flex h-[26px] shrink-0 items-center bg-[#007acc] pl-[10px] whitespace-nowrap text-[#d3ebfb]">
      <span className="grow">Ready</span>
      <Svg className="h-[18px] w-[21px]" box="0 0 21 18">
        <path d="M1 4h16v10H9l-4 4v-4H1z" fill="#f7cf4a" />
        <ellipse cx="13" cy="6.5" rx="3" ry="5" stroke="#222" strokeWidth="1.8" />
      </Svg>
      <span className="ml-[2px] w-[110px] tracking-[0.1px]">No Messages</span>
      <span className="w-[110px] tracking-[0.05px]">No Selection</span>
      <Tri look="h-[7px] w-[11px] rotate-180 text-white" className="mt-[-2px]" />
      <span className="ml-[8px] w-[174px] tracking-[0.3px]">Metric (m, kg, N, s, V, A)</span>
      <span className="w-[68px]">Degrees</span>
      <span className="w-[49px]">rad/s</span>
      <span className="w-[54px]">Celsius</span>
    </div>
  );
}

function TaskSlot({ children, dot, bar, className = "w-[55px]" }: P & { dot?: boolean; bar?: boolean }) {
  return (
    <span className={"relative flex h-[58px] shrink-0 items-center justify-center " + className}>
      {bar && <span className="absolute inset-x-[2px] inset-y-[4px] rounded-[5px] border border-[#3f3f42] bg-[#2f2f31]" />}
      <span className="relative">{children}</span>
      {dot && <span className="absolute bottom-[4px] h-[4px] w-[8px] rounded-full bg-[#9a9a9a]" />}
      {bar && <span className="absolute bottom-[4px] h-[4px] w-[20px] rounded-full bg-[#d8d8d8]" />}
    </span>
  );
}

function TaskBar() {
  return (
    <div className="flex h-[57px] shrink-0 items-center bg-[#202020] font-['Noto_Sans','Open_Sans',sans-serif] text-[14px] whitespace-nowrap text-white">
      <div className="flex w-[654px] items-center pl-[26px]">
        <span className="relative mr-[6px]">
          <Svg className="h-[32px] w-[32px]" box="0 0 32 32">
            <path d="M1 21l6-7 7 6-6 8z" fill="#1c8c1c" />
            <path d="M7 14l9 13 11-9v-7l-10 7-5-4z" fill="#4cc41c" />
          </Svg>
          <span className="absolute top-[-6px] right-0 flex h-[20px] w-[20px] items-center justify-center rounded-full bg-[#fa8f96] text-[13px] text-black">1</span>
        </span>
        <span className="mt-[-1px] flex flex-col leading-[20px]">
          <span className="tracking-[0.27px]">Nifty midcap</span>
          <span className="text-[13.5px] tracking-[0.2px] text-[#6fcf5f]">+0.71%</span>
        </span>
      </div>
      <TaskSlot className="w-[55px]">
        <Svg className="h-[29px] w-[29px]" box="0 0 29 29">
          <defs>
            <linearGradient id="win" x1="0" y1="0" x2="1" y2="1">
              <stop offset="0" stopColor="#6fdcfb" />
              <stop offset="1" stopColor="#0f8ff0" />
            </linearGradient>
          </defs>
          <path d="M0 0h13.8v13.8H0zM15.2 0H29v13.8H15.2zM0 15.2h13.8V29H0zM15.2 15.2H29V29H15.2z" fill="url(#win)" />
        </Svg>
      </TaskSlot>
      <div className="ml-[4px] flex h-[40px] w-[275px] shrink-0 items-center rounded-full border border-[#555] bg-[#3b3a3f] pl-[14px]">
        <Svg className="h-[20px] w-[20px]" box="0 0 20 20">
          <circle cx="8" cy="8.5" r="6.5" stroke="#eee" strokeWidth="1.7" />
          <path d="M13 13.5l5.5 5" stroke="#eee" strokeWidth="1.8" />
        </Svg>
        <span className="ml-[11px] text-[16px] tracking-[0.1px] text-[#dcdcdc]">Search</span>
        <Svg className="mr-[7px] ml-auto h-[34px] w-[52px]" box="0 0 52 34">
          <path d="M2 12c16-2 26 6 48 21M24 10c4 8 3 12-3 20M34 20c5-6 7-10 8-15M14 12c6 2 10 6 12 10" stroke="#a87444" strokeWidth="1.8" />
          <path d="M32 21l18 12" stroke="#b98650" strokeWidth="3" />
          <g fill="#e0c53a">
            <ellipse cx="5" cy="5" rx="3.5" ry="3" /><ellipse cx="12" cy="5" rx="3" ry="3" /><ellipse cx="10" cy="12" rx="4" ry="2.6" /><ellipse cx="3" cy="13" rx="2.5" ry="3" />
            <ellipse cx="23" cy="4" rx="3" ry="4" /><ellipse cx="19" cy="12" rx="3.5" ry="3" /><ellipse cx="30" cy="9" rx="3" ry="4" /><ellipse cx="25" cy="14" rx="2.5" ry="3" />
            <ellipse cx="37" cy="4" rx="2.5" ry="3.5" /><ellipse cx="46" cy="7" rx="3" ry="3.5" /><ellipse cx="47" cy="15" rx="3.5" ry="2.5" /><ellipse cx="39" cy="12" rx="2.5" ry="3" />
            <ellipse cx="17" cy="22" rx="3.5" ry="3" /><ellipse cx="8" cy="24" rx="4" ry="3" /><ellipse cx="15" cy="30" rx="3.5" ry="2.5" /><ellipse cx="25" cy="27" rx="3" ry="3.5" />
          </g>
        </Svg>
      </div>
      <TaskSlot className="ml-[2px] w-[56px]">
        <Svg className="h-[28px] w-[30px]" box="0 0 30 28">
          <rect x="8" y="0" width="22" height="20" rx="2" fill="#f2f2f2" />
          <rect x="0" y="8" width="22" height="20" rx="2" fill="#8a8a8a" fillOpacity=".85" />
        </Svg>
      </TaskSlot>
      <TaskSlot dot className="w-[54px]">
        <Svg className="h-[27px] w-[31px]" box="0 0 31 27">
          <path d="M0 3q0-3 3-3h8l3 4h14q3 0 3 3v5H0z" fill="#e09a14" />
          <rect y="5" width="31" height="22" rx="2" fill="#fccb3c" />
          <path d="M6 27v-7q0-2 2-2h15q2 0 2 2v7z" fill="#1c7cd4" />
          <path d="M10 23h11" stroke="#0f4f94" strokeWidth="1.5" />
        </Svg>
      </TaskSlot>
      <TaskSlot className="w-[56px]">
        <Svg className="h-[27px] w-[27px]" box="0 0 27 27">
          <defs>
            <linearGradient id="ij" x1="0" y1="0" x2="1" y2="1">
              <stop offset="0" stopColor="#fb7c2c" />
              <stop offset=".35" stopColor="#e82c9c" />
              <stop offset=".6" stopColor="#2c6cf8" />
              <stop offset="1" stopColor="#1ca0f8" />
            </linearGradient>
          </defs>
          <path d="M3 1h21l2 2v20l-3 3H2l-1-5z" fill="url(#ij)" />
          <rect x="4.5" y="4.5" width="18" height="18" fill="#120a1c" />
          <path d="M7 7.5h4M9 7.5v6M7 13.5h4M13 7.5h4v5q0 1-1 1h-2.5M7 19.5h7" stroke="#fff" strokeWidth="1.5" />
        </Svg>
      </TaskSlot>
      <TaskSlot dot className="w-[54px]">
        <span className="flex h-[31px] w-[30px] flex-col items-center bg-black">
          <Svg className="h-[19px] w-[20px]" box="0 0 20 19">
            <path d="M10 1l4.5 2.5v5L10 11 5.5 8.5v-5zM5.5 8.5L10 11v5l-4.5 2.5L1 16v-5zM14.5 8.5L19 11v5l-4.5 2.5L10 16v-5zM5.5 3.5L10 6l4.5-2.5M10 6v5M1 11l4.5 2.5L10 11l4.5 2.5L19 11M5.5 13.5v5M14.5 13.5v5" stroke="#f5a81c" strokeWidth="1.3" />
          </Svg>
          <span className="text-[12px] leading-[12px] font-bold">WB</span>
        </span>
      </TaskSlot>
      <TaskSlot bar className="w-[55px]">
        <span className="flex h-[31px] w-[30px] flex-col items-center bg-black">
          <Gears className="h-[20px] w-[20px]" />
          <span className="text-[12px] leading-[11px] font-bold">M</span>
        </span>
      </TaskSlot>
      <div className="ml-auto flex items-center pr-[23px]">
        <Svg className="h-[9px] w-[14px]" box="0 0 14 9"><path d="M1 8l6-6 6 6" stroke="#fff" strokeWidth="1.6" /></Svg>
        <Svg className="ml-[22px] h-[15px] w-[21px]" box="0 0 21 15">
          <path d="M5 14a4.5 4.5 0 0 1 0-8.5 6 6 0 0 1 11-.5 4.5 4.5 0 0 1 0 9z" fill="#bdbdbd" />
          <path d="M3 14l8-7q6-2 9 3-1 4-4 4z" fill="#f4f4f4" />
        </Svg>
        <span className="mt-[-1px] ml-[21px] flex w-[32px] flex-col items-center text-[14.5px] leading-[19.5px]"><span>ENG</span><span>IN</span></span>
        <Svg className="ml-[20px] h-[16px] w-[20px]" box="0 0 20 16">
          <path d="M1 6a13 13 0 0 1 18 0M4 9a9 9 0 0 1 12 0M7 12a4.5 4.5 0 0 1 6 0" stroke="#fff" strokeWidth="1.5" />
          <circle cx="10" cy="14.3" r="1.5" fill="#fff" />
        </Svg>
        <Svg className="ml-[10px] h-[16px] w-[19px]" box="0 0 19 16">
          <path d="M1 5.5h3.5L9 1.5v13l-4.5-4H1z" stroke="#fff" strokeWidth="1.3" />
          <path d="M11.5 5.5q2 2.5 0 5M14 3.5q3.5 4.5 0 9" stroke="#fff" strokeWidth="1.3" />
          <path d="M16.5 1.5q4.5 6.5 0 13" stroke="#777" strokeWidth="1.3" />
        </Svg>
        <Svg className="ml-[10px] h-[20px] w-[21px]" box="0 0 21 20">
          <path d="M7 5.500h10q1.500 0 1.500 1.500v8q0 2-2 2H5q-2 0-2-2v-3" stroke="#fff" strokeWidth="1.6" />
          <path d="M8 8h8v7H5.500z" fill="#fff" />
          <path d="M19 9h1.500v4H19zM4.500 0L1 6h3L2.500 11 7 4.500H4z" fill="#fff" />
        </Svg>
        <span className="mt-[-1px] ml-[17px] flex w-[81px] flex-col items-end text-[14.5px] leading-[19.5px] tracking-[0.2px]"><span>14:11</span><span>26-04-2024</span></span>
        <Svg className="ml-[11px] h-[19px] w-[16px]" box="0 0 16 19">
          <path d="M8 0q5.5 0 5.5 6.5V11L16 15H0l2.5-4V6.5Q2.5 0 8 0z" fill="#ececec" />
          <path d="M5.5 16.5a2.5 2.5 0 0 0 5 0z" fill="#ececec" />
        </Svg>
        <span className="relative ml-[22px] h-[30px] w-[30px]">
          <Svg className="h-[26px] w-[30px]" box="0 0 30 26">
            <defs>
              <linearGradient id="cpa" x1="0" y1="0" x2="0" y2="1">
                <stop offset="0" stopColor="#1c9cf0" />
                <stop offset=".6" stopColor="#3cc47c" />
                <stop offset="1" stopColor="#f3d02c" />
              </linearGradient>
              <linearGradient id="cpb" x1="0" y1="0" x2="0" y2="1">
                <stop offset="0" stopColor="#a45cf0" />
                <stop offset="1" stopColor="#fb6c7c" />
              </linearGradient>
            </defs>
            <path d="M8 1h10q3 0 4 4l1 3h-6L12 22H4q-4 0-3-5L4 5q1-4 4-4z" fill="url(#cpa)" />
            <path d="M18 8h7q4 0 3 5l-3 9q-1 3-5 3h-8z" fill="url(#cpb)" />
            <path d="M16 1q4 0 5 4l1 3h-6z" fill="#1c4cc8" />
          </Svg>
          <span className="absolute right-0 bottom-[0px] rounded-[2px] bg-[#f7b81c] px-[2px] text-[9px] leading-[10px] font-bold text-black">PRE</span>
        </span>
      </div>
    </div>
  );
}

export default function App() {
  return (
    <div className="flex h-[1078px] w-[1918px] flex-col overflow-hidden bg-[#efeff2] font-['Open_Sans',sans-serif] text-[14px] leading-[18px]">
      <TopBar />
      <Ribbon />
      <div className="flex h-[824px] shrink-0">
        <div className="flex w-[288px] shrink-0 flex-col">
          <OutlinePanel />
          <DetailsPanel />
        </div>
        <div className="ml-[4px] flex grow flex-col">
          <ViewToolbar />
          <Viewport />
          <div className="mt-[5px] flex grow">
            <MessagesPanel />
            <div className="w-[5px] shrink-0 bg-[#efeff2]" />
            <TabularPanel />
          </div>
        </div>
      </div>
      <StatusBar />
      <TaskBar />
    </div>
  );
}
